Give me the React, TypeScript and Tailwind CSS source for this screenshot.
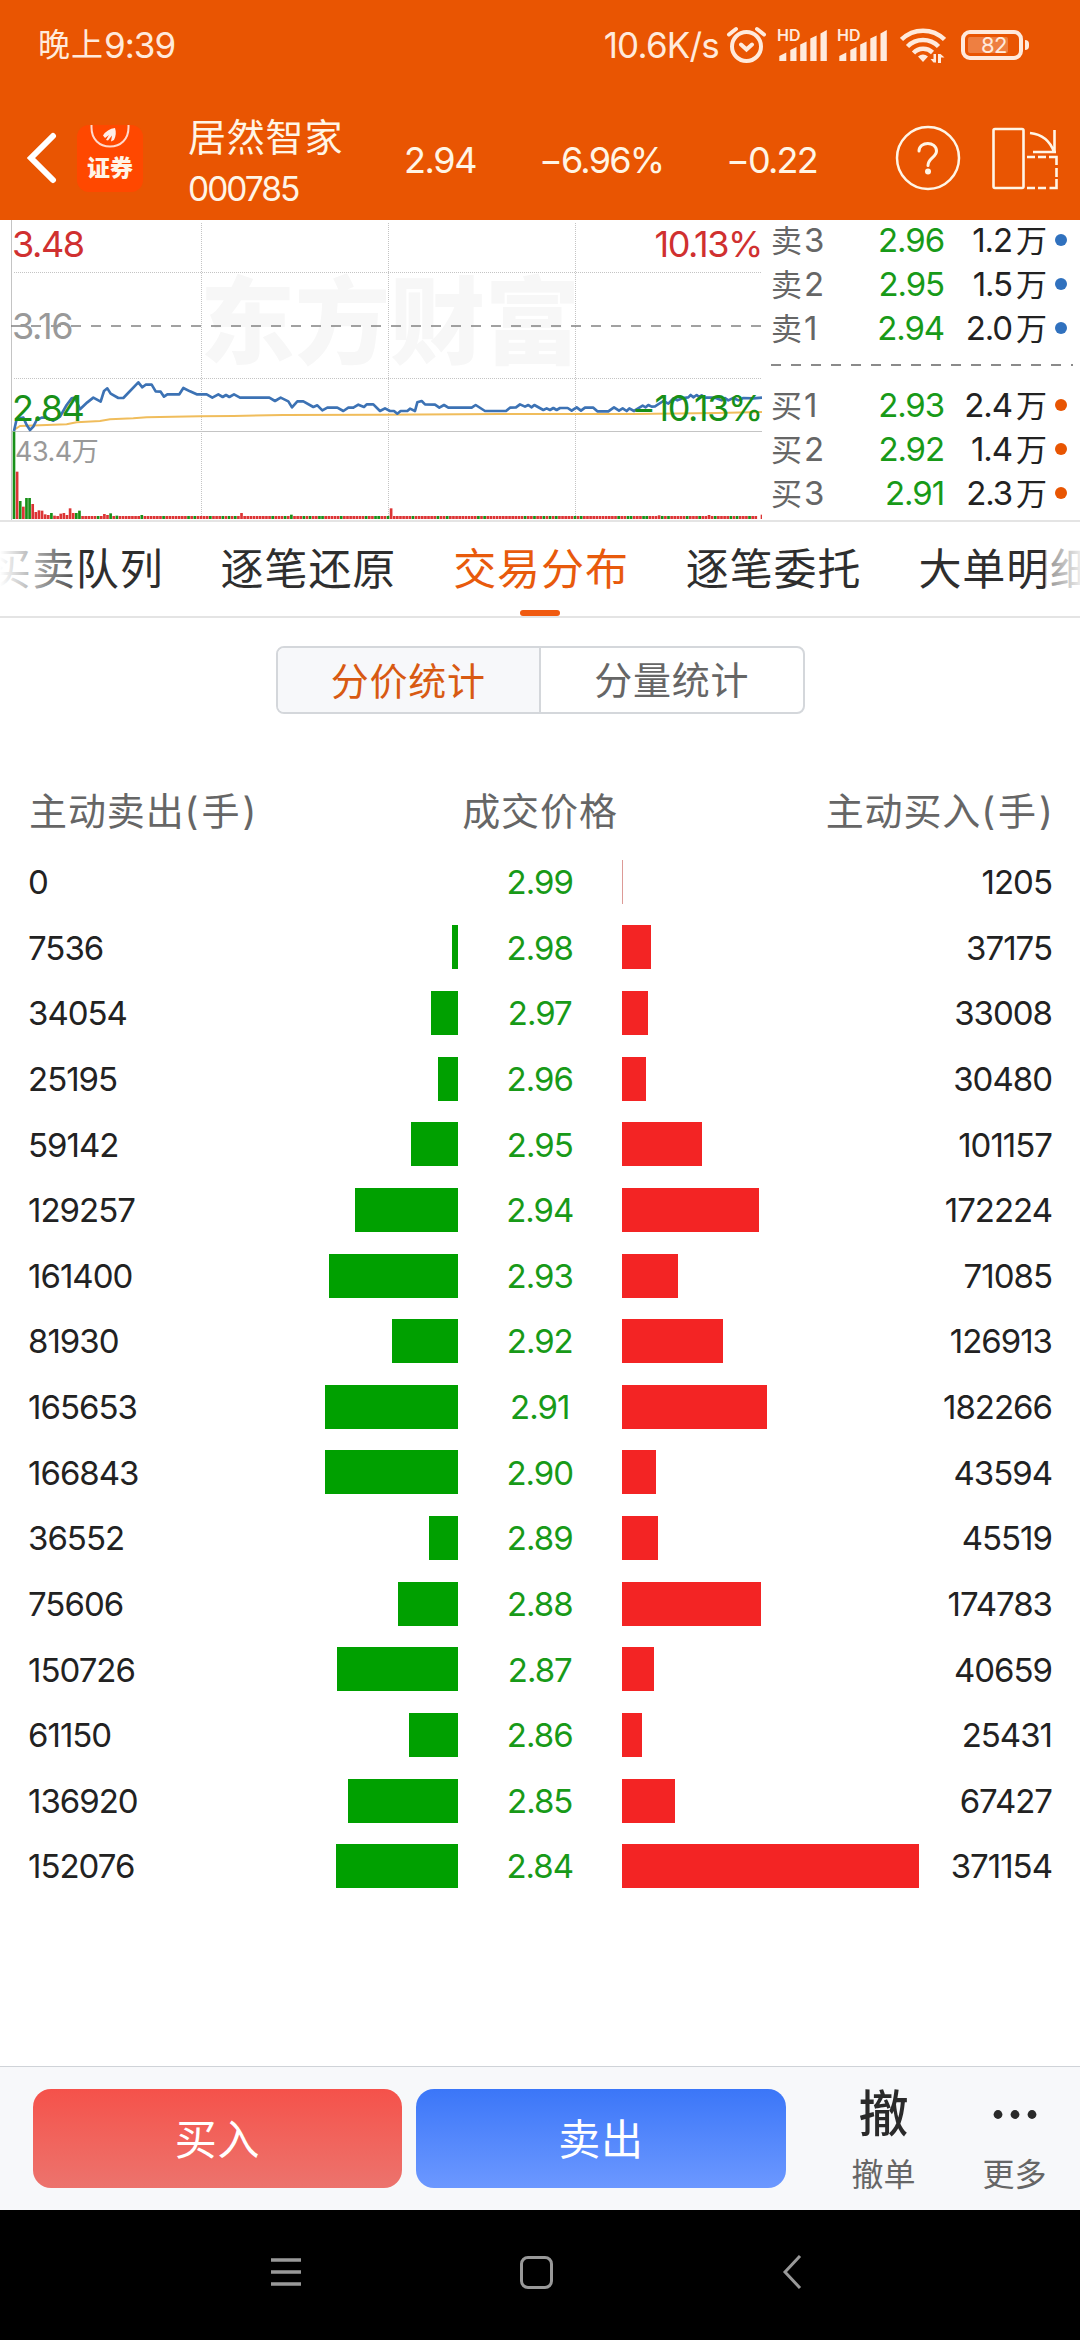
import clsx from "clsx";

const LEVELS = [
  { price: "2.99", sell: 0, buy: 1205 },
  { price: "2.98", sell: 7536, buy: 37175 },
  { price: "2.97", sell: 34054, buy: 33008 },
  { price: "2.96", sell: 25195, buy: 30480 },
  { price: "2.95", sell: 59142, buy: 101157 },
  { price: "2.94", sell: 129257, buy: 172224 },
  { price: "2.93", sell: 161400, buy: 71085 },
  { price: "2.92", sell: 81930, buy: 126913 },
  { price: "2.91", sell: 165653, buy: 182266 },
  { price: "2.90", sell: 166843, buy: 43594 },
  { price: "2.89", sell: 36552, buy: 45519 },
  { price: "2.88", sell: 75606, buy: 174783 },
  { price: "2.87", sell: 150726, buy: 40659 },
  { price: "2.86", sell: 61150, buy: 25431 },
  { price: "2.85", sell: 136920, buy: 67427 },
  { price: "2.84", sell: 152076, buy: 371154 },
];

const MAX_VOLUME = 371154;
const MAX_BAR = 297;

const ASKS = [
  { side: "卖", level: "3", price: "2.96", volume: "1.2" },
  { side: "卖", level: "2", price: "2.95", volume: "1.5" },
  { side: "卖", level: "1", price: "2.94", volume: "2.0" },
];

const BIDS = [
  { side: "买", level: "1", price: "2.93", volume: "2.4" },
  { side: "买", level: "2", price: "2.92", volume: "1.4" },
  { side: "买", level: "3", price: "2.91", volume: "2.3" },
];

const TABS = ["买卖队列", "逐笔还原", "交易分布", "逐笔委托", "大单明细"];

// chart units are a third of a pixel
const PRICE_LINE =
  "42,648 50,612 70,608 80,630 90,645 100,635 110,615 125,608 140,608 160,617 180,605 200,570 215,550 225,548 240,583 262,562 280,548 302,560 312,528 322,520 332,536 355,549 370,549 415,502 427,517 437,509 455,509 467,529 482,530 492,545 502,538 538,538 550,519 570,529 590,538 620,538 637,548 655,538 668,546 678,540 688,546 702,538 720,548 808,548 825,558 842,548 865,559 876,577 892,559 910,559 940,576 952,571 967,586 982,578 1012,578 1030,588 1045,578 1060,578 1075,569 1092,576 1100,568 1120,568 1140,588 1155,580 1170,588 1182,588 1192,596 1202,588 1222,588 1230,581 1245,588 1252,562 1265,558 1275,568 1305,569 1318,578 1332,570 1345,578 1415,578 1427,570 1455,588 1518,588 1530,578 1548,577 1560,568 1575,575 1585,570 1595,577 1603,570 1630,585 1640,580 1650,585 1660,579 1670,585 1680,579 1703,579 1715,587 1730,577 1743,587 1755,578 1780,578 1792,589 1825,589 1842,577 1857,587 1868,580 1880,588 1888,580 1902,588 1928,572 1937,577 1945,570 1955,575 1965,574 1990,558 2005,566 2020,550 2032,556 2050,549 2065,547 2072,540 2080,547 2090,540 2098,547 2105,541 2115,548 2145,548 2165,556 2175,549 2185,556 2200,549 2215,556 2230,549 2260,550 2286,548";

const AVERAGE_LINE =
  "42,645 60,633 200,628 230,622 300,618 330,613 400,610 440,607 600,604 700,603 850,600 1140,599 1500,597 1900,597 2150,594 2286,591";

const VOLUME_PEAKS: Record<number, number> = {
  0: 262, 1: 142, 2: 54, 3: 37, 4: 63, 5: 63, 6: 45, 7: 21, 8: 26, 9: 25,
  10: 14, 11: 12, 12: 18, 13: 10, 14: 9, 15: 16, 16: 18, 17: 12, 18: 32,
  19: 18, 20: 18, 21: 25, 29: 15, 30: 12, 31: 17, 33: 10, 41: 12, 73: 18,
  89: 13, 121: 32, 207: 11, 223: 12, 239: 0, 240: 13,
};

const VOLUME_DOWN = new Set([
  0, 2, 4, 5, 12, 20, 21, 27, 31, 33, 41, 48, 56, 58, 63, 67, 69, 71, 83, 87,
  89, 93, 95, 98, 99, 105, 113, 116, 117, 120, 128, 136, 139, 149, 151, 164,
  167, 170, 172, 174, 180, 182, 194, 197, 198, 202, 203, 208, 210, 216, 220,
  225, 230, 232, 236,
]);

const Signal = () => (
  <div className="relative h-8 w-[50px] text-[#ffeadc]">
    <span className="absolute -top-[2px] left-0 text-[16px] leading-none font-semibold">
      HD
    </span>
    <svg viewBox="0 0 50 32" className="h-8 w-[50px]" fill="currentColor">
      <path d="M2.300 27l7-3.500V32h-7zM13.300 21l6.200-3v14h-6.200zM23.200 15.500l6.400-3V32h-6.400zM33.300 9.500l6.300-3V32h-6.300zM43.500 4.500l6.300-3.500v31h-6.300z" />
    </svg>
  </div>
);

const StatusBar = () => (
  <div className="flex h-[90px] items-center pr-[51px] pl-[38px] text-[#ffeadc]">
    <div className="flex items-center text-[35px]">
      <span className="text-[32px] tracking-[1px]">晚上</span>
      <span className="tracking-[-1px]">9:39</span>
    </div>
    <span className="ml-auto text-[35px] tracking-[-0.800px]">10.6K/s</span>
    <svg
      viewBox="0 0 42 40"
      className="ml-[7px] h-10 w-[42px]"
      fill="none"
      stroke="currentColor"
      strokeWidth="4"
      strokeLinecap="round"
    >
      <circle cx="20.500" cy="21.500" r="14.500" />
      <path d="M15 19.500l5.500 5 5.500-5M3 9.500l7-5.500M38 9.500l-7-5.500" />
    </svg>
    <div className="ml-[9px]">
      <Signal />
    </div>
    <div className="ml-[10px]">
      <Signal />
    </div>
    <svg
      viewBox="0 0 46 36"
      className="ml-[13px] h-9 w-[46px]"
      fill="none"
      stroke="currentColor"
      strokeWidth="4.500"
    >
      <path d="M1.500 12.500a30.500 30.500 0 0 1 43 0" />
      <path d="M7.500 19.500a22 22 0 0 1 31 0" />
      <path d="M13.500 26a13.500 13.500 0 0 1 19-.5" />
      <path
        d="M18 29.500q5-4 10 0l-5 5.500zM36 27v8.500h-2.500l-3-3.500h3V27zM38 36v-9h2.500l4 3.500H41V36z"
        fill="currentColor"
        stroke="none"
      />
    </svg>
    <div className="ml-[15px] flex h-[30px] w-[62px] rounded-[9px] border-4 border-[#ffeadc] p-[3px]">
      <div className="flex h-4 w-[40px] items-center justify-end rounded-xs bg-white/25 pr-px text-[22px] tracking-[-0.500px]">
        82
      </div>
    </div>
    <div className="ml-[2px] h-[10px] w-[4px] rounded-r-sm bg-[#ffeadc]" />
  </div>
);

const StockHeader = () => (
  <div className="flex h-[130px] items-center pt-[6px] text-[#fff5e6]">
    <svg
      viewBox="0 0 30 52"
      className="ml-[27px] h-[52px] w-[30px]"
      fill="none"
      stroke="white"
      strokeWidth="6"
      strokeLinecap="round"
    >
      <path d="M26 4L4 26l22 22" />
    </svg>
    <div className="ml-[20px] flex h-[67px] w-[66px] flex-col items-center rounded-xl bg-[#ff4800]">
      <svg viewBox="0 0 40 26" className="h-[26px] w-10" fill="none">
        <path
          d="M1.500 0v2.500c0 12 8 19 18.500 19s18.500-7 18.500-19V0"
          stroke="#ffd9cc"
          strokeWidth="2"
        />
        <path
          d="M13 10.500Q17 4 25 3q2 6-1 12l-3 1.500 1-6-4 5-2-.5 3-5-4 3z"
          fill="#ffeee8"
        />
      </svg>
      <span className="mt-[2px] text-[23px] leading-[30px] font-black">
        证券
      </span>
    </div>
    <div className="ml-[45px] flex w-[216px] flex-col pt-[9px]">
      <span className="text-[38px] leading-[52px] tracking-[0.800px]">
        居然智家
      </span>
      <span className="text-[33.500px] leading-[52px] tracking-[-2px]">
        000785
      </span>
    </div>
    <div className="flex w-[491px] pt-[3px] text-[36px] leading-[52px] tracking-[-1.800px]">
      <span className="w-[135px] tracking-[-1.400px]">2.94</span>
      <span className="w-[187px]">−6.96%</span>
      <span>−0.22</span>
    </div>
    <svg
      viewBox="0 0 66 66"
      className="h-[66px] w-[66px]"
      fill="none"
      stroke="currentColor"
    >
      <circle cx="33" cy="33" r="31" strokeWidth="2.500" />
      <path
        d="M24 26c0-10 17.500-10 17.500 0 0 6.500-8.500 7-8.500 14.500"
        strokeWidth="3"
        strokeLinecap="round"
      />
      <circle cx="33" cy="46.500" r="3" fill="currentColor" stroke="none" />
    </svg>
    <svg
      viewBox="0 0 68 64"
      className="ml-[30px] h-16 w-[68px]"
      fill="none"
      stroke="currentColor"
      strokeWidth="2.600"
    >
      <rect x="2.500" y="3" width="30" height="59" rx="1.500" />
      <path d="M39 7Q57 9 63 26M63.500 4v22M42 26h23" />
      <path d="M36 31h8M47 31h8M58 31h7.500v8M65.500 42v9M65.500 53v9h-7M55 62h-8M44 62h-8" />
    </svg>
  </div>
);

const PriceChart = () => (
  <div className="relative h-[300px] w-[762px]">
    <span className="absolute top-[38px] left-[200px] text-[95px] leading-[130px] font-black text-[#f7f7f7]">
      东方财富
    </span>
    <svg
      viewBox="0 15 2286 900"
      className="absolute top-0 left-0 h-[300px] w-[762px]"
      fill="none"
    >
      <g stroke="#c4c4c4" strokeWidth="3">
        <path d="M34.500 15V915M34.500 649.500H2286" />
        <path
          d="M42 172.500H2286M42 490.500H2286M604.500 24V912M1165.500 24V912M1726.500 24V912"
          strokeDasharray="3 3"
        />
      </g>
      <path
        d="M33 333H2286"
        stroke="#828282"
        strokeWidth="5"
        strokeDasharray="30 30"
      />
      <polyline points={AVERAGE_LINE} stroke="#f0bd5c" strokeWidth="6" />
      <polyline
        points={PRICE_LINE}
        stroke="#3c72b4"
        strokeWidth="8"
        strokeLinejoin="round"
      />
      {Array.from({ length: 241 }, (_, i) => {
        const height = VOLUME_PEAKS[i] ?? 9;
        return (
          <rect
            key={i}
            x={38 + i * 9.35}
            y={912 - height}
            width="8"
            height={height}
            fill={VOLUME_DOWN.has(i) ? "#189018" : "#dc3535"}
          />
        );
      })}
    </svg>
    <div className="absolute inset-0 text-[36px] leading-[44px] tracking-[-1.400px]">
      <span className="absolute top-[2px] left-[12px] text-[#d03030]">
        3.48
      </span>
      <span className="absolute top-[84px] left-[12px] text-[#999]">3.16</span>
      <span className="absolute top-[166px] left-[12px] text-[#189018]">
        2.84
      </span>
      <span className="absolute top-[2px] right-0 text-[#d03030]">10.13%</span>
      <span className="absolute top-[166px] right-0 text-[#189018]">
        −10.13%
      </span>
      <span className="absolute top-[210px] left-[15px] text-[27px] tracking-[-0.500px] text-[#999]">
        43.4万
      </span>
    </div>
  </div>
);

const BookRow = ({
  side,
  level,
  price,
  volume,
}: {
  side: string;
  level: string;
  price: string;
  volume: string;
}) => (
  <div className="flex h-11 items-center text-[33px] leading-[44px] tracking-[-1.100px]">
    <span className="w-[62px] text-[#666]">
      <span className="text-[31px]">{side}</span>
      <span className="ml-[3px]">{level}</span>
    </span>
    <span className="w-[111px] text-right text-[#189a18]">{price}</span>
    <span className="w-[103px] text-right text-[#222]">
      {volume}
      <span className="ml-1 text-[31px] tracking-normal">万</span>
    </span>
    <span
      className={clsx(
        "ml-[8px] h-3 w-3 rounded-full",
        side === "卖" ? "bg-[#3071be]" : "bg-[#e85502]",
      )}
    />
  </div>
);

const OrderBook = () => (
  <div className="-mt-[2px] flex w-[318px] flex-col pl-[9px]">
    {ASKS.map((row) => (
      <BookRow key={row.level} {...row} />
    ))}
    <svg viewBox="0 0 302 33" className="h-[33px] w-[302px]">
      <path
        d="M0 15H302"
        stroke="#8a8a8a"
        strokeWidth="2"
        strokeDasharray="10 10"
      />
    </svg>
    {BIDS.map((row) => (
      <BookRow key={row.level} {...row} />
    ))}
  </div>
);

const Tabs = () => (
  <div className="relative flex h-[98px] justify-center gap-[57px] overflow-hidden border-y-2 border-[#e4e4e4] pt-px pl-[2px]">
    {TABS.map((tab) => (
      <div
        key={tab}
        className={clsx(
          "relative flex shrink-0 items-center text-[43px] tracking-[0.900px]",
          tab === "交易分布" ? "text-[#e85a0c]" : "text-[#2e2e2e]",
        )}
      >
        {tab}
        {tab === "交易分布" && (
          <div className="absolute bottom-0 left-[67px] h-1.5 w-10 rounded-full bg-[#f05a10]" />
        )}
      </div>
    ))}
    <div className="absolute inset-y-0 left-0 w-[80px] bg-linear-to-r from-white to-white/10" />
    <div className="absolute inset-y-0 right-0 w-[35px] bg-linear-to-l from-white/90 to-white/45" />
  </div>
);

const Segments = () => (
  <div className="mx-auto mt-[28px] flex h-[68px] w-[529px] shrink-0 overflow-hidden rounded-lg border-2 border-[#d4d7db] pt-px text-[38px] tracking-[0.800px]">
    <div className="-mt-px flex flex-1 items-center justify-center border-r-2 border-[#d4d7db] bg-[#f7f8fa] pt-[2px] text-[#d85a12]">
      分价统计
    </div>
    <div className="flex flex-1 items-center justify-center text-[#666]">
      分量统计
    </div>
  </div>
);

const Distribution = () => (
  <div className="mt-[67px] flex flex-col">
    <div className="grid h-[60px] grid-cols-3 items-center px-[29px] text-[38px] tracking-[0.900px] text-[#666]">
      <span>
        主动卖出<span className="tracking-[3px]">(手)</span>
      </span>
      <span className="text-center">成交价格</span>
      <span className="-mr-[5px] text-right">
        主动买入<span className="tracking-[3px]">(手)</span>
      </span>
    </div>
    <div className="mt-[8px] flex flex-col text-[33px] tracking-[-1px] text-[#222]">
      {LEVELS.map(({ price, sell, buy }) => (
        <div
          key={price}
          className="flex h-[65.640px] items-center pr-[28px] pl-[28px]"
        >
          <span className="w-[130px] pt-[2px]">{sell}</span>
          <div className="flex w-[300px] justify-end">
            <div
              className="h-11 bg-[#00a000]"
              style={{ width: (sell / MAX_VOLUME) * MAX_BAR }}
            />
          </div>
          <span className="w-[163.500px] pt-[2px] text-center text-[#189a18]">
            {price}
          </span>
          <div
            className={clsx(
              "h-11",
              buy < 5000 ? "bg-[#dd9a96]" : "bg-[#f32424]",
            )}
            style={{ width: Math.max(1, (buy / MAX_VOLUME) * MAX_BAR) }}
          />
          <span className="ml-auto pt-[2px]">{buy}</span>
        </div>
      ))}
    </div>
  </div>
);

const TradeBar = () => (
  <div className="mt-auto flex h-[144px] border-t border-[#cfd3d8] bg-[#f7f8fa] pt-[22px] pl-[33px]">
    <button className="h-[99px] w-[369px] rounded-[18px] bg-linear-to-b from-[#f5514a] to-[#ec736d] pt-px text-[42px] tracking-[0.700px] text-white">
      买入
    </button>
    <button className="ml-[14px] h-[99px] w-[370px] rounded-[18px] bg-linear-to-b from-[#3b76f8] to-[#6c98ff] pt-px text-[42px] tracking-[0.700px] text-white">
      卖出
    </button>
    <div className="ml-[32px] flex w-[131px] flex-col items-center text-[#2a2a2a]">
      <span className="text-[50px] leading-[50px] font-medium">撤</span>
      <span className="mt-[14px] text-[32px] leading-[44px] text-[#666]">
        撤单
      </span>
    </div>
    <div className="flex w-[131px] flex-col items-center text-[#2a2a2a]">
      <svg viewBox="0 0 50 50" className="h-[50px] w-[50px]" fill="currentColor">
        <circle cx="8" cy="25.500" r="4.400" />
        <circle cx="25" cy="25.500" r="4.400" />
        <circle cx="42" cy="25.500" r="4.400" />
      </svg>
      <span className="mt-[14px] text-[32px] leading-[44px] text-[#666]">
        更多
      </span>
    </div>
  </div>
);

const NavBar = () => (
  <div className="flex h-[130px] items-start bg-black pt-[45px] pl-[269px] text-[#999]">
    <svg viewBox="0 0 34 34" className="h-[34px] w-[34px]">
      <path
        d="M2 5h30M2 17h30M2 29h30"
        stroke="currentColor"
        strokeWidth="3.400"
      />
    </svg>
    <div className="mt-[1px] ml-[217px] h-[33px] w-[33px] rounded-lg border-[3.500px] border-[#999]" />
    <svg
      viewBox="0 0 20 34"
      className="ml-[229px] h-[34px] w-5"
      fill="none"
      stroke="currentColor"
      strokeWidth="3"
    >
      <path d="M18 1L3 17l15 16" />
    </svg>
  </div>
);

const App = () => {
  return (
    <div className="flex h-[2340px] w-[1080px] flex-col overflow-hidden bg-white font-['Inter','Noto_Sans_CJK_SC',sans-serif]">
      <div className="h-[220px] shrink-0 bg-[#e95502]">
        <StatusBar />
        <StockHeader />
      </div>
      <div className="flex h-[300px] shrink-0">
        <PriceChart />
        <OrderBook />
      </div>
      <Tabs />
      <Segments />
      <Distribution />
      <TradeBar />
      <NavBar />
    </div>
  );
};

export default App;
